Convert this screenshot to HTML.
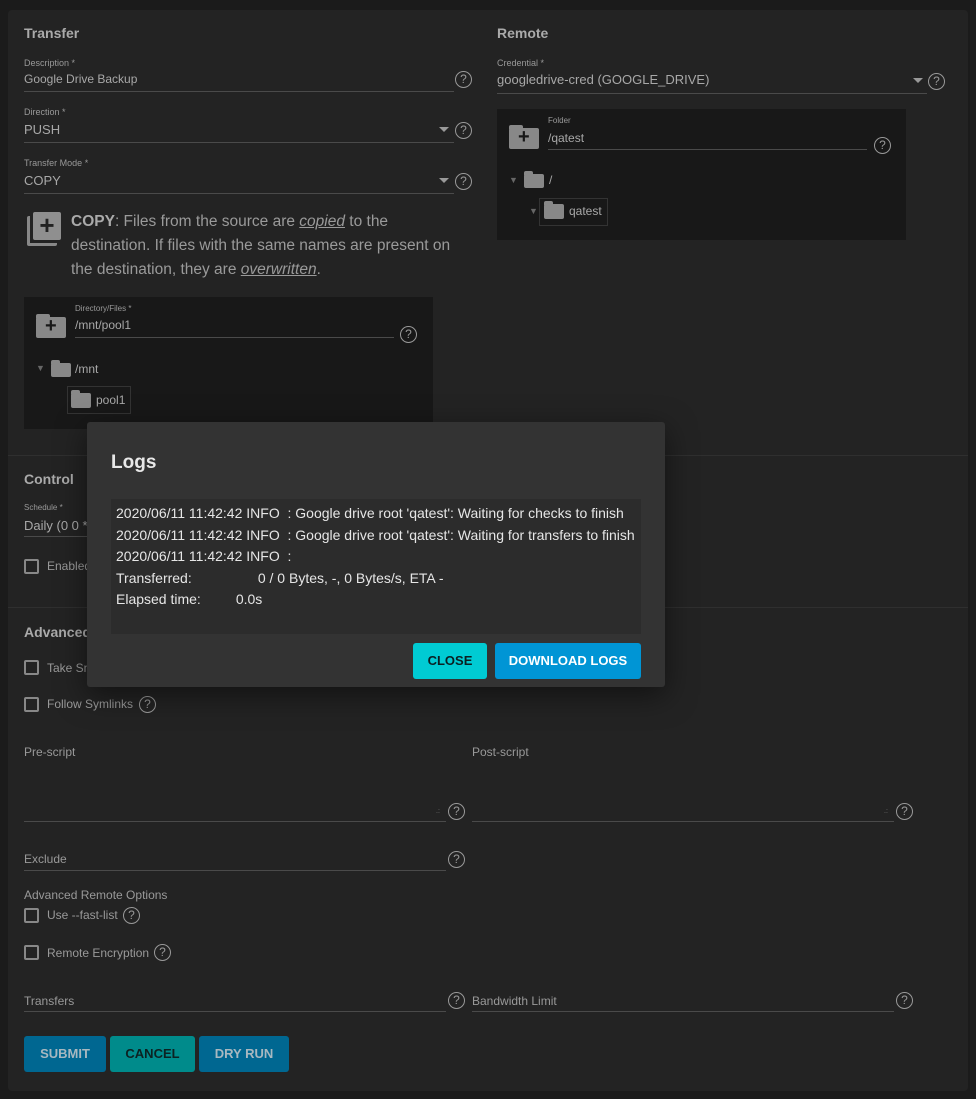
<!DOCTYPE html>
<html><head><style>
*{margin:0;padding:0;box-sizing:border-box}
body{width:976px;height:1099px;background:#1b1b1b;font-family:"Liberation Sans",sans-serif;color:#a6a6a6;position:relative;overflow:hidden}
.a{position:absolute}
.card{left:8px;top:10px;width:960px;height:1081px;background:#232323;border-radius:4px}
h3{position:absolute;font-size:14px;font-weight:bold;color:#aaa}
.lbl{position:absolute;font-size:9px;color:#999}
.val{position:absolute;font-size:13px;color:#a8a8a8}
.ln{position:absolute;height:1px;background:#4a4a4a}
.hp{position:absolute;width:17px;height:17px;border:1.6px solid #999;border-radius:50%;font-size:12px;color:#999;text-align:center;line-height:14px}
.dd{position:absolute;width:0;height:0;border-left:5px solid transparent;border-right:5px solid transparent;border-top:5px solid #999}
.cb{position:absolute;width:15px;height:15px;border:2px solid #888;border-radius:2px}
.t12{position:absolute;font-size:12px;color:#999}
.fold{position:absolute;background:#888;border-radius:2px}
.fold:before{content:"";position:absolute;left:0;top:-3px;width:45%;height:4px;background:#888;border-radius:2px 2px 0 0}
.btn{position:absolute;border-radius:3px;font-size:13px;font-weight:bold;text-align:center}
.div{position:absolute;left:8px;width:960px;height:1px;background:#2f2f2f}
</style></head><body>
<div class="a card"></div>
<div class="div" style="top:455px"></div>
<div class="div" style="top:607px"></div>

<h3 style="left:24px;top:25px">Transfer</h3>
<div class="lbl" style="left:24px;top:58px">Description *</div>
<div class="val" style="left:24px;top:72px;font-size:12px">Google Drive Backup</div>
<div class="ln" style="left:24px;top:91px;width:430px"></div>
<div class="hp" style="left:455px;top:71px">?</div>

<div class="lbl" style="left:24px;top:107px">Direction *</div>
<div class="val" style="left:24px;top:122px">PUSH</div>
<div class="dd" style="left:439px;top:127px"></div>
<div class="ln" style="left:24px;top:142px;width:430px"></div>
<div class="hp" style="left:455px;top:122px">?</div>

<div class="lbl" style="left:24px;top:158px">Transfer Mode *</div>
<div class="val" style="left:24px;top:173px">COPY</div>
<div class="dd" style="left:439px;top:178px"></div>
<div class="ln" style="left:24px;top:193px;width:430px"></div>
<div class="hp" style="left:455px;top:173px">?</div>

<div class="a" style="left:27px;top:216px;width:30px;height:30px;border-left:3px solid #888;border-bottom:3px solid #888;border-radius:2px"></div>
<div class="a" style="left:33px;top:212px;width:28px;height:28px;background:#8f8f8f;border-radius:2px;color:#222;font-size:26px;font-weight:bold;text-align:center;line-height:27px">+</div>
<div class="a" style="left:71px;top:210px;width:420px;font-size:15.5px;line-height:24px;color:#9a9a9a;white-space:nowrap"><b style="color:#aaa">COPY</b>: Files from the source are <i><u>copied</u></i> to the<br>destination. If files with the same names are present on<br>the destination, they are <i><u>overwritten</u></i>.</div>

<div class="a" style="left:24px;top:297px;width:409px;height:132px;background:#181818"></div>
<div class="fold" style="left:36px;top:317px;width:30px;height:21px"></div>
<div class="a" style="left:45px;top:315px;font-size:20px;font-weight:bold;color:#181818">+</div>
<div class="lbl" style="left:75px;top:304px;font-size:8px">Directory/Files *</div>
<div class="val" style="left:75px;top:318px;font-size:12px">/mnt/pool1</div>
<div class="ln" style="left:75px;top:337px;width:319px"></div>
<div class="hp" style="left:400px;top:326px">?</div>
<div class="a" style="left:36px;top:363px;font-size:9px;color:#666">▼</div>
<div class="fold" style="left:51px;top:363px;width:20px;height:14px"></div>
<div class="val" style="left:75px;top:362px;font-size:12px">/mnt</div>
<div class="a" style="left:67px;top:386px;width:64px;height:28px;border:1px solid #333"></div>
<div class="fold" style="left:71px;top:393px;width:20px;height:15px"></div>
<div class="val" style="left:96px;top:393px;font-size:12px">pool1</div>

<h3 style="left:497px;top:25px">Remote</h3>
<div class="lbl" style="left:497px;top:58px">Credential *</div>
<div class="val" style="left:497px;top:72px">googledrive-cred (GOOGLE_DRIVE)</div>
<div class="dd" style="left:913px;top:78px"></div>
<div class="ln" style="left:497px;top:93px;width:430px"></div>
<div class="hp" style="left:928px;top:73px">?</div>
<div class="a" style="left:497px;top:109px;width:409px;height:131px;background:#181818"></div>
<div class="fold" style="left:509px;top:128px;width:30px;height:21px"></div>
<div class="a" style="left:518px;top:126px;font-size:20px;font-weight:bold;color:#181818">+</div>
<div class="lbl" style="left:548px;top:116px;font-size:8px">Folder</div>
<div class="val" style="left:548px;top:131px;font-size:12px">/qatest</div>
<div class="ln" style="left:548px;top:149px;width:319px"></div>
<div class="hp" style="left:874px;top:137px">?</div>
<div class="a" style="left:509px;top:175px;font-size:9px;color:#666">▼</div>
<div class="fold" style="left:524px;top:174px;width:20px;height:14px"></div>
<div class="val" style="left:549px;top:173px;font-size:12px">/</div>
<div class="a" style="left:529px;top:206px;font-size:9px;color:#666">▼</div>
<div class="a" style="left:539px;top:198px;width:69px;height:28px;border:1px solid #333"></div>
<div class="fold" style="left:544px;top:204px;width:20px;height:15px"></div>
<div class="val" style="left:569px;top:204px;font-size:12px">qatest</div>

<h3 style="left:24px;top:471px">Control</h3>
<div class="lbl" style="left:24px;top:503px;font-size:8px">Schedule *</div>
<div class="val" style="left:24px;top:518px">Daily (0 0 *</div>
<div class="ln" style="left:24px;top:536px;width:70px"></div>
<div class="cb" style="left:24px;top:559px"></div>
<div class="t12" style="left:47px;top:559px">Enabled</div>

<h3 style="left:24px;top:624px">Advanced Options</h3>
<div class="cb" style="left:24px;top:660px"></div>
<div class="t12" style="left:47px;top:661px">Take Snapshot</div>
<div class="cb" style="left:24px;top:697px"></div>
<div class="t12" style="left:47px;top:697px">Follow Symlinks</div>
<div class="hp" style="left:139px;top:696px">?</div>

<div class="t12" style="left:24px;top:745px">Pre-script</div>
<div class="ln" style="left:24px;top:821px;width:422px"></div>
<div class="hp" style="left:448px;top:803px">?</div>
<div class="t12" style="left:472px;top:745px">Post-script</div>
<div class="ln" style="left:472px;top:821px;width:422px"></div>
<div class="hp" style="left:896px;top:803px">?</div>
<div class="a" style="left:436px;top:808px;font-size:7px;color:#777">.:</div>
<div class="a" style="left:884px;top:808px;font-size:7px;color:#777">.:</div>

<div class="t12" style="left:24px;top:852px">Exclude</div>
<div class="ln" style="left:24px;top:870px;width:422px"></div>
<div class="hp" style="left:448px;top:851px">?</div>

<div class="t12" style="left:24px;top:888px">Advanced Remote Options</div>
<div class="cb" style="left:24px;top:908px"></div>
<div class="t12" style="left:47px;top:908px">Use --fast-list</div>
<div class="hp" style="left:123px;top:907px">?</div>
<div class="cb" style="left:24px;top:945px"></div>
<div class="t12" style="left:47px;top:946px">Remote Encryption</div>
<div class="hp" style="left:154px;top:944px">?</div>

<div class="t12" style="left:24px;top:994px">Transfers</div>
<div class="ln" style="left:24px;top:1011px;width:422px"></div>
<div class="hp" style="left:448px;top:992px">?</div>
<div class="t12" style="left:472px;top:994px">Bandwidth Limit</div>
<div class="ln" style="left:472px;top:1011px;width:422px"></div>
<div class="hp" style="left:896px;top:992px">?</div>

<div class="btn" style="left:24px;top:1036px;width:82px;height:36px;line-height:36px;background:#006791;color:#a8b8c0">SUBMIT</div>
<div class="btn" style="left:110px;top:1036px;width:85px;height:36px;line-height:36px;background:#008b8b;color:#0c2222">CANCEL</div>
<div class="btn" style="left:199px;top:1036px;width:90px;height:36px;line-height:36px;background:#006791;color:#a8b8c0">DRY RUN</div>

<div class="a" style="left:87px;top:422px;width:578px;height:265px;background:#333;border-radius:3px;box-shadow:0 8px 30px rgba(0,0,0,.5)"></div>
<div class="a" style="left:111px;top:452px;font-size:19px;font-weight:bold;color:#e8e8e8">Logs</div>
<div class="a" style="left:111px;top:499px;width:530px;height:135px;background:#2c2c2c"></div>
<div class="a" style="left:116px;top:503px;font-size:14px;line-height:21.5px;color:#e6e6e6;white-space:pre">2020/06/11 11:42:42 INFO  : Google drive root 'qatest': Waiting for checks to finish
2020/06/11 11:42:42 INFO  : Google drive root 'qatest': Waiting for transfers to finish
2020/06/11 11:42:42 INFO  :
Transferred:                 0 / 0 Bytes, -, 0 Bytes/s, ETA -
Elapsed time:         0.0s</div>
<div class="btn" style="left:413px;top:643px;width:74px;height:36px;line-height:36px;background:#00cbd3;color:#0b1f22">CLOSE</div>
<div class="btn" style="left:495px;top:643px;width:146px;height:36px;line-height:36px;background:#0095d5;color:#fff">DOWNLOAD LOGS</div>
</body></html>
